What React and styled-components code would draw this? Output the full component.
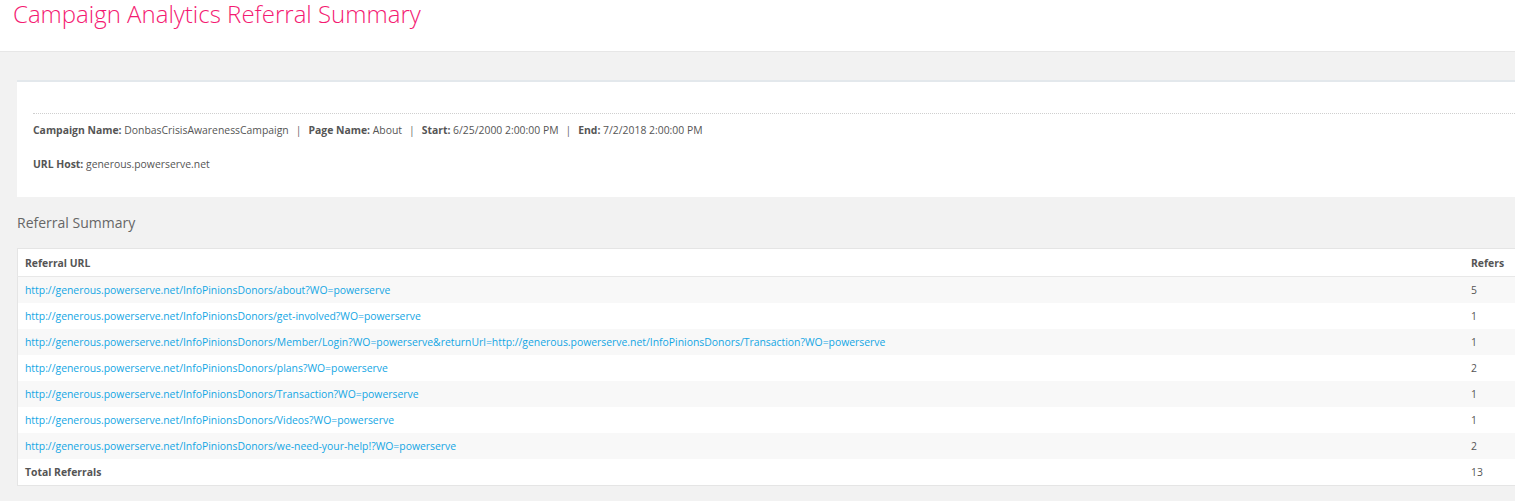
import React from "react";
import styled, { createGlobalStyle } from "styled-components";

const Global = createGlobalStyle`
  html, body { margin: 0; padding: 0; overflow-x: hidden; background: #f2f2f2; }
  body { font-family: "Open Sans", "Noto Sans", Arial, sans-serif; color: #555; }
`;

const Header = styled.header`
  background: #fff;
  height: 51px;
  border-bottom: 1px solid #e7e7e7;
  padding-left: 13px;
`;

const Title = styled.h1`
  margin: 0;
  font-weight: 300;
  font-size: 24px;
  line-height: 28px;
  color: #f41a72;
`;

const Main = styled.main`
  padding: 28px 0 16px 17px;
`;

const Card = styled.section`
  background: #fff;
  border-top: 2px solid #e3e8ec;
  margin-right: -40px;
  padding: 31px 16px 25px 16px;
`;

const Divider = styled.div`
  border-top: 1px dotted #cfcfcf;
  margin-bottom: 8px;
`;

const InfoLine = styled.p`
  margin: 0;
  font-size: 10.4px;
  line-height: 16px;
  color: #555;
  & + & { margin-top: 18px; }
`;

const Label = styled.b`
  font-weight: 700;
  color: #555;
`;

const Sep = styled.span`
  margin: 0 7px;
  color: #666;
`;

const SectionTitle = styled.h2`
  margin: 16px 0 0;
  font-size: 14px;
  font-weight: 400;
  line-height: 20px;
  color: #666;
  height: 35px;
`;

const Table = styled.table`
  width: calc(100% + 40px);
  border-collapse: collapse;
  background: #fff;
  border: 1px solid #e5e5e5;
  font-size: 10.4px;
`;

const Th = styled.th`
  text-align: left;
  font-weight: 700;
  color: #555;
  height: 27px;
  padding: 0 7px;
  border-bottom: 1px solid #e8e8e8;
  width: ${(p) => (p.$narrow ? "76px" : "auto")};
`;

const Tr = styled.tr`
  background: ${(p) => (p.$striped ? "#f8f8f8" : "#fff")};
`;

const Td = styled.td`
  height: 26px;
  padding: 0 7px;
  color: #555;
  font-weight: ${(p) => (p.$bold ? 700 : 400)};
`;

const Link = styled.a`
  color: #13a6e4;
  text-decoration: none;
`;

const rows = [
  ["http://generous.powerserve.net/InfoPinionsDonors/about?WO=powerserve", 5],
  ["http://generous.powerserve.net/InfoPinionsDonors/get-involved?WO=powerserve", 1],
  [
    "http://generous.powerserve.net/InfoPinionsDonors/Member/Login?WO=powerserve&returnUrl=http://generous.powerserve.net/InfoPinionsDonors/Transaction?WO=powerserve",
    1,
  ],
  ["http://generous.powerserve.net/InfoPinionsDonors/plans?WO=powerserve", 2],
  ["http://generous.powerserve.net/InfoPinionsDonors/Transaction?WO=powerserve", 1],
  ["http://generous.powerserve.net/InfoPinionsDonors/Videos?WO=powerserve", 1],
  ["http://generous.powerserve.net/InfoPinionsDonors/we-need-your-help!?WO=powerserve", 2],
];

export default function App() {
  return (
    <>
      <Global />
      <Header>
        <Title>Campaign Analytics Referral Summary</Title>
      </Header>
      <Main>
        <Card>
          <Divider />
          <InfoLine>
            <Label>Campaign Name:</Label> DonbasCrisisAwarenessCampaign<Sep>|</Sep>
            <Label>Page Name:</Label> About<Sep>|</Sep>
            <Label>Start:</Label> 6/25/2000 2:00:00 PM<Sep>|</Sep>
            <Label>End:</Label> 7/2/2018 2:00:00 PM
          </InfoLine>
          <InfoLine>
            <Label>URL Host:</Label> generous.powerserve.net
          </InfoLine>
        </Card>
        <SectionTitle>Referral Summary</SectionTitle>
        <Table>
          <thead>
            <tr>
              <Th>Referral URL</Th>
              <Th $narrow>Refers</Th>
            </tr>
          </thead>
          <tbody>
            {rows.map(([url, n], i) => (
              <Tr key={i} $striped={i % 2 === 0}>
                <Td>
                  <Link href="#">{url}</Link>
                </Td>
                <Td>{n}</Td>
              </Tr>
            ))}
            <Tr>
              <Td $bold>Total Referrals</Td>
              <Td>13</Td>
            </Tr>
          </tbody>
        </Table>
      </Main>
    </>
  );
}
